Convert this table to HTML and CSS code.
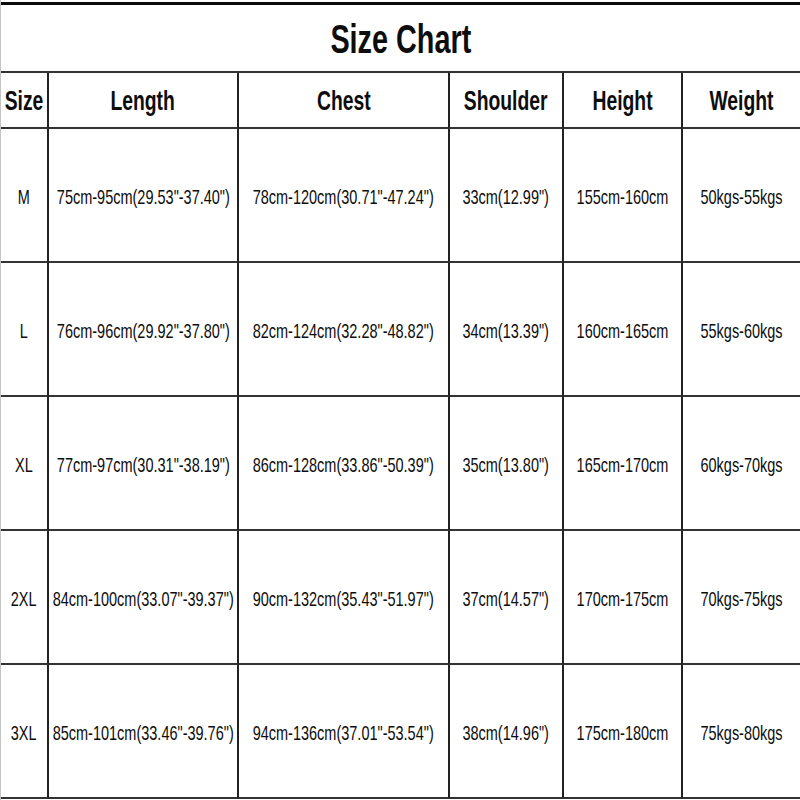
FILE: index.html
```html
<!DOCTYPE html>
<html>
<head>
<meta charset="utf-8">
<link rel="stylesheet" href="styles.css">
</head>
<body>
<div class="chart">
  <div class="title"><span class="t">Size Chart</span></div>
  <div class="grid">
    <div class="cell head"><span class="t">Size</span></div>
    <div class="cell head"><span class="t">Length</span></div>
    <div class="cell head"><span class="t">Chest</span></div>
    <div class="cell head"><span class="t">Shoulder</span></div>
    <div class="cell head"><span class="t">Height</span></div>
    <div class="cell head"><span class="t">Weight</span></div>

    <div class="cell"><span class="t">M</span></div>
    <div class="cell"><span class="t">75cm-95cm(29.53"-37.40")</span></div>
    <div class="cell"><span class="t">78cm-120cm(30.71"-47.24")</span></div>
    <div class="cell"><span class="t">33cm(12.99")</span></div>
    <div class="cell"><span class="t">155cm-160cm</span></div>
    <div class="cell"><span class="t">50kgs-55kgs</span></div>

    <div class="cell"><span class="t">L</span></div>
    <div class="cell"><span class="t">76cm-96cm(29.92"-37.80")</span></div>
    <div class="cell"><span class="t">82cm-124cm(32.28"-48.82")</span></div>
    <div class="cell"><span class="t">34cm(13.39")</span></div>
    <div class="cell"><span class="t">160cm-165cm</span></div>
    <div class="cell"><span class="t">55kgs-60kgs</span></div>

    <div class="cell"><span class="t">XL</span></div>
    <div class="cell"><span class="t">77cm-97cm(30.31"-38.19")</span></div>
    <div class="cell"><span class="t">86cm-128cm(33.86"-50.39")</span></div>
    <div class="cell"><span class="t">35cm(13.80")</span></div>
    <div class="cell"><span class="t">165cm-170cm</span></div>
    <div class="cell"><span class="t">60kgs-70kgs</span></div>

    <div class="cell"><span class="t">2XL</span></div>
    <div class="cell"><span class="t">84cm-100cm(33.07"-39.37")</span></div>
    <div class="cell"><span class="t">90cm-132cm(35.43"-51.97")</span></div>
    <div class="cell"><span class="t">37cm(14.57")</span></div>
    <div class="cell"><span class="t">170cm-175cm</span></div>
    <div class="cell"><span class="t">70kgs-75kgs</span></div>

    <div class="cell"><span class="t">3XL</span></div>
    <div class="cell"><span class="t">85cm-101cm(33.46"-39.76")</span></div>
    <div class="cell"><span class="t">94cm-136cm(37.01"-53.54")</span></div>
    <div class="cell"><span class="t">38cm(14.96")</span></div>
    <div class="cell"><span class="t">175cm-180cm</span></div>
    <div class="cell"><span class="t">75kgs-80kgs</span></div>
  </div>
</div>
</body>
</html>
```
FILE: styles.css
```css
html, body {
  margin: 0;
  padding: 0;
  background: #fff;
}
body {
  width: 800px;
  height: 800px;
  overflow: hidden;
  font-family: "Liberation Sans", Arial, sans-serif;
  color: #0d0d0d;
}
.chart {
  width: 800px;
  height: 800px;
  box-sizing: border-box;
  border-left: 1px solid #c4c4c4;
  padding-top: 2px;
}
.title {
  height: 64px;
  border-top: 3px solid #0a0a0a;
  border-bottom: 2px solid #333;
  display: flex;
  align-items: center;
  justify-content: center;
  font-size: 40px;
  font-weight: bold;
  padding-top: 2px;
  box-sizing: content-box;
}
.t {
  display: inline-block;
  white-space: nowrap;
  transform: scaleX(0.69);
}
.title .t {
  transform: scaleX(0.72);
}
.grid {
  display: grid;
  grid-template-columns: 48px 190px 211px 114px 119px 117px;
  grid-template-rows: 56px 134px 134px 134px 134px 134px;
}
.cell {
  box-sizing: border-box;
  border-right: 2px solid #222;
  border-bottom: 2px solid #333;
  display: flex;
  align-items: center;
  justify-content: center;
  font-size: 21px;
  padding-top: 4px;
}
.cell:nth-child(6n) {
  border-right: none;
}
.head {
  font-size: 28px;
  font-weight: bold;
  padding-top: 2px;
}
```
